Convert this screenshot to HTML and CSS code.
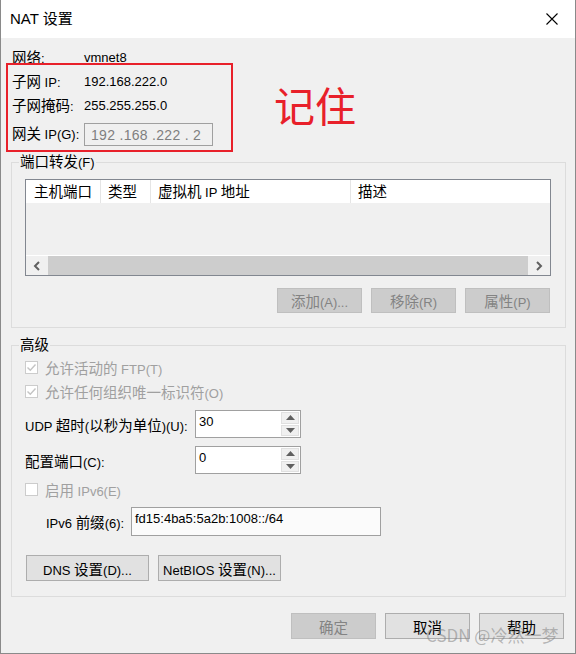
FILE: index.html
```html
<!DOCTYPE html>
<html lang="zh-CN">
<head>
<meta charset="utf-8">
<title>NAT 设置</title>
<link rel="stylesheet" href="styles.css">
</head>
<body>
<div class="window">
  <div class="titlebar">
    <span class="title">NAT <span class="zh">设置</span></span>
    <svg class="close" width="12" height="12" viewBox="0 0 12 12"><path d="M0.5 0.5 L11.5 11.5 M11.5 0.5 L0.5 11.5" stroke="#000" stroke-width="1.1" fill="none"/></svg>
  </div>
  <div class="content">
    <div class="info">
      <div class="row"><span class="lbl"><span class="zh">网络</span>:</span><span class="val">vmnet8</span></div>
      <div class="row"><span class="lbl"><span class="zh">子网</span> IP:</span><span class="val">192.168.222.0</span></div>
      <div class="row"><span class="lbl"><span class="zh">子网掩码</span>:</span><span class="val">255.255.255.0</span></div>
      <div class="row row-gw"><span class="lbl"><span class="zh">网关</span> IP(G):</span><span class="ipbox">192 .168 .222 . 2</span></div>
    </div>

    <fieldset class="group g1">
      <legend><span class="zh">端口转发</span>(F)</legend>
      <div class="list">
        <div class="list-head">
          <div class="col c1"><span class="zh">主机端口</span></div>
          <div class="col c2"><span class="zh">类型</span></div>
          <div class="col c3"><span class="zh">虚拟机</span> IP <span class="zh">地址</span></div>
          <div class="col c4"><span class="zh">描述</span></div>
        </div>
        <div class="list-body"></div>
        <div class="hscroll">
          <div class="sbtn"><svg width="8" height="10" viewBox="0 0 8 10"><path d="M6 1 L2 5 L6 9" stroke="#606060" stroke-width="2" fill="none"/></svg></div>
          <div class="track"></div>
          <div class="sbtn"><svg width="8" height="10" viewBox="0 0 8 10"><path d="M2 1 L6 5 L2 9" stroke="#606060" stroke-width="2" fill="none"/></svg></div>
        </div>
      </div>
      <div class="btnrow">
        <div class="btn disabled"><span><span class="zh">添加</span>(A)...</span></div>
        <div class="btn disabled"><span><span class="zh">移除</span>(R)</span></div>
        <div class="btn disabled"><span><span class="zh">属性</span>(P)</span></div>
      </div>
    </fieldset>

    <fieldset class="group g2">
      <legend><span class="zh">高级</span></legend>
      <div class="cbrow r-cb1 dim">
        <span class="cb"><svg width="11" height="11" viewBox="0 0 11 11"><path d="M1.5 5.5 L4.3 8.3 L9.5 2.5" stroke="#c4c4c4" stroke-width="1.4" fill="none"/></svg></span>
        <span><span class="zh">允许活动的</span> FTP(T)</span>
      </div>
      <div class="cbrow r-cb2 dim">
        <span class="cb"><svg width="11" height="11" viewBox="0 0 11 11"><path d="M1.5 5.5 L4.3 8.3 L9.5 2.5" stroke="#c4c4c4" stroke-width="1.4" fill="none"/></svg></span>
        <span><span class="zh">允许任何组织唯一标识符</span>(O)</span>
      </div>
      <div class="fieldrow r-udp">
        <span class="flbl">UDP <span class="zh">超时</span>(<span class="zh">以秒为单位</span>)(U):</span>
        <div class="spin">
          <span class="spin-text">30</span>
          <div class="spin-btns">
            <div class="sp"><svg width="9" height="5" viewBox="0 0 9 5"><path d="M0 5 L4.5 0 L9 5 Z" fill="#606060"/></svg></div>
            <div class="sp"><svg width="9" height="5" viewBox="0 0 9 5"><path d="M0 0 L4.5 5 L9 0 Z" fill="#606060"/></svg></div>
          </div>
        </div>
      </div>
      <div class="fieldrow r-cfg">
        <span class="flbl"><span class="zh">配置端口</span>(C):</span>
        <div class="spin">
          <span class="spin-text">0</span>
          <div class="spin-btns">
            <div class="sp"><svg width="9" height="5" viewBox="0 0 9 5"><path d="M0 5 L4.5 0 L9 5 Z" fill="#606060"/></svg></div>
            <div class="sp"><svg width="9" height="5" viewBox="0 0 9 5"><path d="M0 0 L4.5 5 L9 0 Z" fill="#606060"/></svg></div>
          </div>
        </div>
      </div>
      <div class="cbrow r-cb3 dim">
        <span class="cb"></span>
        <span><span class="zh">启用</span> IPv6(E)</span>
      </div>
      <div class="fieldrow r-v6">
        <span class="v6lbl">IPv6 <span class="zh">前缀</span>(6):</span>
        <div class="v6box">fd15:4ba5:5a2b:1008::/64</div>
      </div>
      <div class="btnrow2">
        <div class="btn wide"><span>DNS <span class="zh">设置</span>(D)...</span></div>
        <div class="btn wide"><span>NetBIOS <span class="zh">设置</span>(N)...</span></div>
      </div>
    </fieldset>

    <div class="footer">
      <div class="btn disabled"><span class="zh">确定</span></div>
      <div class="btn"><span class="zh">取消</span></div>
      <div class="btn"><span class="zh">帮助</span></div>
    </div>
  </div>

  <div class="redbox"></div>
  <div class="note">记住</div>
  <div class="watermark">CSDN @冷然一梦</div>
</div>
</body>
</html>
```
FILE: styles.css
```css
html, body {
  margin: 0;
  padding: 0;
  background: #f0f0f0;
}
body {
  font-family: "Liberation Sans", "Noto Sans CJK SC", sans-serif;
  font-size: 13px;
  color: #000;
}
.zh {
  font-family: "Noto Sans CJK SC", sans-serif;
  font-size: 14.5px;
}
.window {
  position: relative;
  width: 576px;
  height: 654px;
  box-sizing: border-box;
  background: #f0f0f0;
  border-left: 1px solid #8a8a8a;
  border-right: 1px solid #8a8a8a;
  border-bottom: 1px solid #8a8a8a;
  overflow: hidden;
}
.titlebar {
  height: 38px;
  background: #fff;
  display: flex;
  align-items: center;
  justify-content: space-between;
  padding: 0 17px 0 9px;
}
.title {
  font-size: 15px;
  line-height: 20px;
  margin-top: -1px;
}
.title .zh { font-size: 15px; }
.close { display: block; margin-top: -1px; }

.content {
  padding: 0 9px 0 10px;
}
.info {
  margin-top: 8px;
  padding-left: 1px;
}
.row {
  display: flex;
  align-items: center;
  height: 24px;
  line-height: 18px;
}
.row-gw { height: 32px; }
.lbl { width: 72px; flex: none; }
.ipbox {
  box-sizing: border-box;
  width: 129px;
  height: 23px;
  border: 1px solid #a0a0a0;
  background: #f0f0f0;
  color: #7f7f7f;
  padding: 2px 0 0 6px;
  font-size: 14px;
  white-space: pre;
  letter-spacing: 0.3px;
}

.group {
  margin: 0;
  border: 1px solid #dcdcdc;
  box-sizing: border-box;
  width: 555px;
  min-width: 0;
}
.group legend {
  padding: 0 1px;
  margin-left: -6px;
  line-height: 18px;
}
.g1 {
  margin-top: 2px;
  padding: 7px 14px 14px 13px;
}
.list {
  box-sizing: border-box;
  width: 526px;
  height: 97px;
  border: 1px solid #828790;
  display: flex;
  flex-direction: column;
}
.list-head {
  display: flex;
  height: 23px;
  background: #fff;
}
.col {
  box-sizing: border-box;
  height: 23px;
  line-height: 22px;
  padding-left: 7px;
  border-right: 1px solid #e5e5e5;
  white-space: nowrap;
}
.c1 { width: 75px; padding-left: 8px; }
.c2 { width: 50px; }
.c3 { width: 200px; }
.c4 { flex: 1; border-right: none; }
.list-body {
  height: 52px;
  background: #f0f0f0;
}
.hscroll {
  display: flex;
  height: 20px;
  border-top: 1px solid #fff;
  box-sizing: border-box;
  background: #f0f0f0;
}
.sbtn {
  width: 22px;
  display: flex;
  align-items: center;
  justify-content: center;
}
.track {
  flex: 1;
  background: #cdcdcd;
}
.btnrow {
  display: flex;
  justify-content: flex-end;
  gap: 9px;
  margin-top: 12px;
  padding-right: 1px;
}
.btn {
  box-sizing: border-box;
  width: 85px;
  height: 25px;
  border: 1px solid #adadad;
  background: #e1e1e1;
  display: flex;
  align-items: center;
  justify-content: center;
  white-space: nowrap;
}
.btn.disabled {
  background: #cccccc;
  border-color: #bfbfbf;
  color: #838383;
}
.btn.wide { width: 123px; height: 26px; }

.g2 {
  margin-top: 7px;
  padding: 1px 14px 15px 13px;
}
.dim { color: #a0a0a0; }
.cbrow {
  display: flex;
  align-items: center;
  height: 22px;
  gap: 7px;
}
.r-cb2 { margin-top: 2px; }
.r-cb3 { margin-top: 4px; }
.cb {
  box-sizing: border-box;
  width: 13px;
  height: 13px;
  border: 1px solid #cccccc;
  background: #fff;
  display: flex;
  align-items: center;
  justify-content: center;
}
.fieldrow {
  display: flex;
  align-items: center;
}
.r-udp { margin-top: 8px; }
.r-cfg { margin-top: 8px; }
.r-v6 { margin-top: 7px; }
.flbl { width: 170px; flex: none; }
.spin {
  box-sizing: border-box;
  width: 106px;
  height: 28px;
  border: 1px solid #a0a0a0;
  background: #fff;
  display: flex;
  justify-content: space-between;
}
.spin-text { padding: 3px 0 0 3px; }
.spin-btns {
  width: 18px;
  display: flex;
  flex-direction: column;
  padding: 1px;
  gap: 1px;
}
.sp {
  flex: 1;
  border: 1px solid #e0e0e0;
  background: #f0f0f0;
  display: flex;
  align-items: center;
  justify-content: center;
}
.v6lbl { width: 85px; margin-left: 21px; flex: none; }
.v6box {
  box-sizing: border-box;
  width: 250px;
  height: 29px;
  border: 1px solid #a0a0a0;
  background: #fbfbfb;
  padding: 3px 0 0 3px;
}
.btnrow2 {
  display: flex;
  gap: 9px;
  margin-top: 19px;
  margin-left: 1px;
}
.footer {
  display: flex;
  justify-content: flex-end;
  gap: 9px;
  margin-top: 16px;
  padding-right: 2px;
}
.footer .btn { height: 26px; }

.redbox {
  position: absolute;
  left: 5px;
  top: 63px;
  width: 227px;
  height: 89px;
  box-sizing: border-box;
  border: 2px solid #e8202a;
}
.note {
  position: absolute;
  left: 273px;
  top: 78px;
  font-family: "Noto Sans CJK SC", sans-serif;
  font-size: 41px;
  line-height: 52px;
  color: #e8202a;
}
.watermark {
  position: absolute;
  left: 425px;
  top: 624px;
  font-family: "Noto Sans CJK SC", sans-serif;
  font-size: 17px;
  line-height: 22px;
  color: rgba(130, 130, 130, 0.55);
  white-space: nowrap;
}
```
